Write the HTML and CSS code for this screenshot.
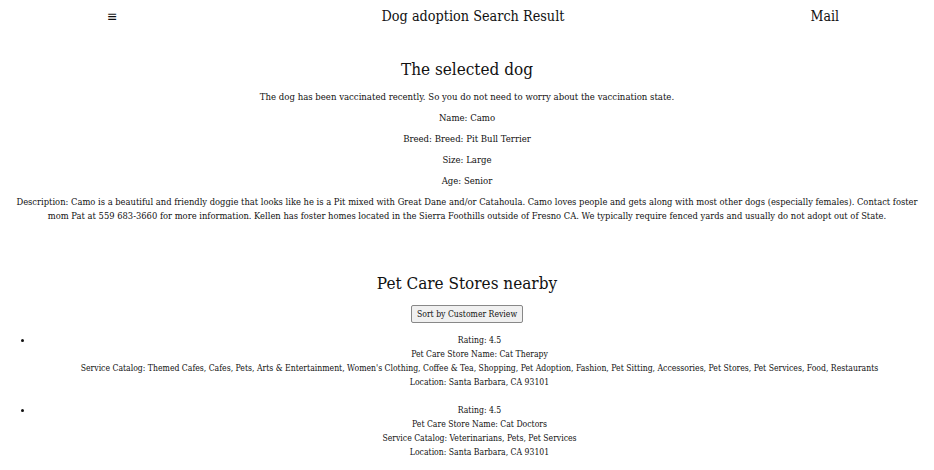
FILE: index.html
```html
<!DOCTYPE html>
<html>
<head>
<meta charset="utf-8">
<link rel="stylesheet" href="styles.css">
</head>
<body>
<header class="topbar">
  <span class="menu">&#8801;</span>
  <span class="title">Dog adoption Search Result</span>
  <span class="mail">Mail</span>
</header>
<main>
  <section class="dog">
    <h2 class="heading">The selected dog</h2>
    <p>The dog has been vaccinated recently. So you do not need to worry about the vaccination state.</p>
    <p>Name: Camo</p>
    <p>Breed: Breed: Pit Bull Terrier</p>
    <p>Size: Large</p>
    <p>Age: Senior</p>
    <p class="desc">Description: Camo is a beautiful and friendly doggie that looks like he is a Pit mixed with Great Dane and/or Catahoula. Camo loves people and gets along with most other dogs (especially females). Contact foster mom Pat at 559 683-3660 for more information. Kellen has foster homes located in the Sierra Foothills outside of Fresno CA. We typically require fenced yards and usually do not adopt out of State.</p>
  </section>
  <section class="stores">
    <h2 class="heading">Pet Care Stores nearby</h2>
    <div class="sortrow"><button class="sort">Sort by Customer Review</button></div>
    <ul class="list">
      <li>
        <div>Rating: 4.5</div>
        <div>Pet Care Store Name: Cat Therapy</div>
        <div>Service Catalog: Themed Cafes, Cafes, Pets, Arts &amp; Entertainment, Women's Clothing, Coffee &amp; Tea, Shopping, Pet Adoption, Fashion, Pet Sitting, Accessories, Pet Stores, Pet Services, Food, Restaurants</div>
        <div>Location: Santa Barbara, CA 93101</div>
      </li>
      <li>
        <div>Rating: 4.5</div>
        <div>Pet Care Store Name: Cat Doctors</div>
        <div>Service Catalog: Veterinarians, Pets, Pet Services</div>
        <div>Location: Santa Barbara, CA 93101</div>
      </li>
    </ul>
  </section>
</main>
</body>
</html>
```
FILE: styles.css
```css
html, body {
  margin: 0;
  padding: 0;
  background: #fff;
  color: #111;
  font-family: "DejaVu Serif Condensed", "Liberation Serif", serif;
}
.topbar {
  display: grid;
  grid-template-columns: 1fr auto 1fr;
  align-items: center;
  height: 32px;
  padding: 0 95px 0 107px;
  font-size: 14.3px;
}
.menu { font-size: 14px; justify-self: start; }
.mail { font-size: 14px; justify-self: end; }
.dog, .stores { text-align: center; padding: 0 8px; }
.heading {
  font-weight: normal;
  font-size: 17px;
  line-height: 24px;
  margin: 25px 0 9px;
}
.dog p {
  font-size: 9.5px;
  line-height: 14px;
  margin: 7px 0;
}
.dog p.desc { font-size: 9.3px; }
.stores { margin-top: 48px; }
.stores .heading { margin-bottom: 7px; }
.sort {
  font-family: inherit;
  font-size: 8.6px;
  padding: 3px 5px;
  background: #f0f0f0;
  border: 1px solid #888;
  border-radius: 2px;
  color: #111;
}
.list {
  margin: 10px 0;
  padding: 0 0 0 25px;
  font-size: 8.6px;
  line-height: 14px;
  text-align: center;
}
.list li { margin-bottom: 14px; }
```
